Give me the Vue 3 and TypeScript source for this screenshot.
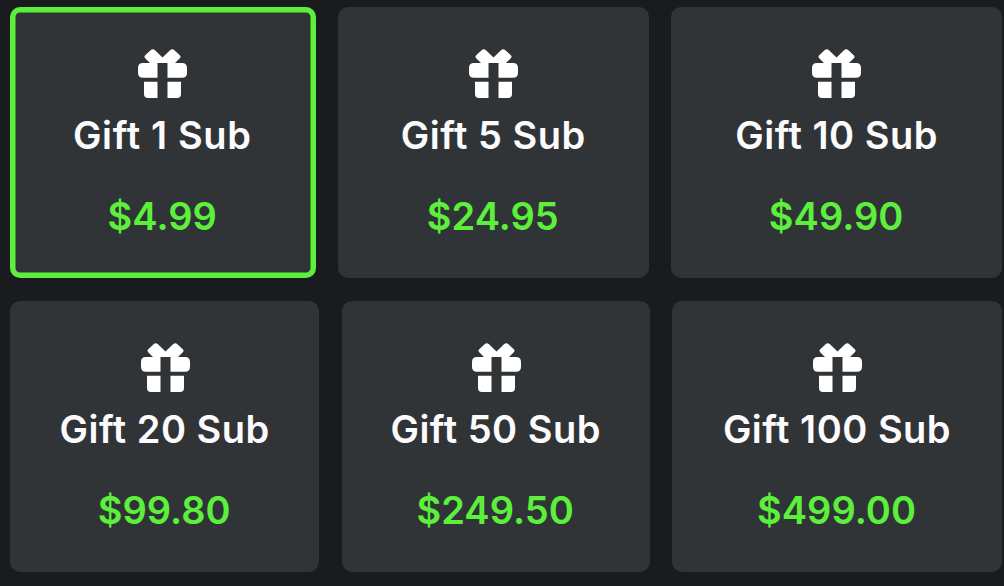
<script setup lang="ts">
interface GiftOption {
  label: string
  price: string
}

const rows: GiftOption[][] = [
  [
    { label: 'Gift 1 Sub', price: '$4.99' },
    { label: 'Gift 5 Sub', price: '$24.95' },
    { label: 'Gift 10 Sub', price: '$49.90' },
  ],
  [
    { label: 'Gift 20 Sub', price: '$99.80' },
    { label: 'Gift 50 Sub', price: '$249.50' },
    { label: 'Gift 100 Sub', price: '$499.00' },
  ],
]
const selected = 'Gift 1 Sub'
</script>

<template>
  <main class="panel">
    <div v-for="(row, i) in rows" :key="i" class="row" :class="i === 0 ? 'first' : 'second'">
      <button
        v-for="option in row"
        :key="option.label"
        type="button"
        class="card"
        :class="{ selected: option.label === selected }"
      >
        <svg class="icon" viewBox="0 0 49 49" aria-hidden="true">
          <path d="M12.6 1.2Q14.8-.9 17 1.2L24.5 8.4 32 1.2Q34.2-.9 36.4 1.2L41.8 6.2Q43.3 7.7 41.8 9.2L37 14H44Q49 14 49 19V23.7Q49 28.7 44 28.7H29.5V14H19.5V28.7H5Q0 28.7 0 23.7V19Q0 14 5 14H12L7.2 9.2Q5.7 7.7 7.2 6.2Z" />
          <path d="M6 32.7H19.5V49H10Q6 49 6 45ZM29.5 32.7H43V45Q43 49 39 49H29.5Z" />
        </svg>
        <span class="label">{{ option.label }}</span>
        <span class="price">{{ option.price }}</span>
      </button>
    </div>
  </main>
</template>

<style>
body {
  margin: 0;
  background: #1a1b1f;
}
</style>

<style scoped>
.panel {
  box-sizing: border-box;
  width: 1004px;
  height: 586px;
  padding: 7px 2px 0 10px;
  overflow: hidden;
  background: #1a1b1f;
  font-family: Inter, "Liberation Sans", sans-serif;
}
.row {
  display: grid;
  height: 271px;
}
.first {
  grid-template-columns: 305.5px 311px 331px;
  column-gap: 22.3px;
}
.second {
  grid-template-columns: 309.4px 308px 330px;
  column-gap: 22.3px;
  margin-top: 23px;
}
.card {
  box-sizing: border-box;
  display: flex;
  flex-direction: column;
  align-items: center;
  min-width: 0;
  padding: 42px 0 0;
  border: 0;
  border-radius: 10px;
  background: #313437;
  font-family: inherit;
}
.selected {
  box-shadow: inset 0 0 0 5.5px #5cf03c;
}
.icon {
  display: block;
  flex: none;
  width: 49px;
  height: 49px;
  fill: #fff;
}
.selected .icon {
  margin-right: 0.6px;
}
.second .icon {
  margin-left: 1.2px;
}
.label,
.price {
  font-size: 38px;
  line-height: 46px;
  font-weight: 600;
  white-space: nowrap;
}
.label {
  margin-top: 14px;
  color: #fbfbfd;
  letter-spacing: 0.5px;
}
.selected .label {
  margin-right: 1px;
  letter-spacing: 0.65px;
}
.price {
  margin: 35px 1px 0 0;
  color: #5cf03c;
  letter-spacing: 0.05px;
}
</style>
